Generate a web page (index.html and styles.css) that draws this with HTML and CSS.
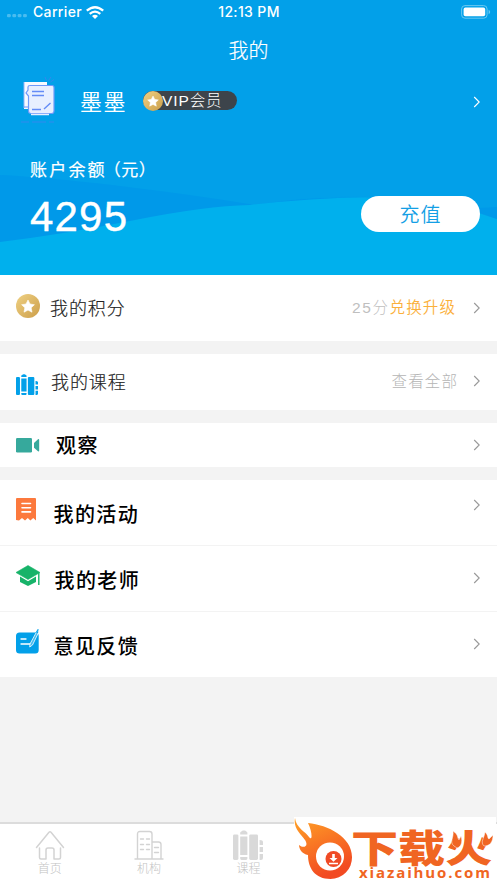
FILE: index.html
```html
<!DOCTYPE html>
<html lang="zh-CN">
<head>
<meta charset="utf-8">
<title>我的</title>
<link rel="stylesheet" href="styles.css">
</head>
<body>
<svg class="defs" width="0" height="0">
  <defs>
    <linearGradient id="gold" x1="0" y1="0" x2="1" y2="1"><stop offset="0" stop-color="#efd184"/><stop offset="1" stop-color="#cc9e49"/></linearGradient>
    <linearGradient id="fire" x1="0" y1="0" x2="0.4" y2="1"><stop offset="0" stop-color="#ffa126"/><stop offset="1" stop-color="#f24a22"/></linearGradient>
    <symbol id="star" viewBox="0 0 24 24"><circle cx="12" cy="12" r="12" fill="url(#gold)"/><path d="M12 6l2 4 4.4.7-3.2 3.1.8 4.4-4-2.1-4 2.1.8-4.4-3.2-3.1L10 10z" fill="#fff" stroke="#fff" stroke-width=".6" stroke-linejoin="round"/></symbol>
    <symbol id="books" viewBox="0 0 30 30"><rect x="0" y="4.400" width="5.400" height="25.600" rx="1.400"/><path d="M7.200 4.400V2.800Q7.200 1.800 8.400 1.600Q9 .4 10.400 .4H11.400Q12.800 .4 13.300 1.600Q14.400 1.800 14.400 2.800V4.400zM7.200 6.400H14.400V25H7.200zM7.200 27H14.400V28.600Q14.400 30 13 30H8.600Q7.200 30 7.200 28.600z"/><rect x="16.200" y="4.400" width="8.800" height="25.600" rx="1.400"/><path d="M26.600 15V10Q30 10 30 12V15zM26.600 17H30V22H26.600zM26.600 24H30V28Q30 30 28 30H26.600z"/></symbol>
    <symbol id="chev" viewBox="0 0 8 12"><path d="M1.200 1L6.200 6 1.200 11" fill="none" stroke="currentColor" stroke-width="1.100"/></symbol>
  </defs>
</svg>
<div class="app">
  <header class="hero">
    <svg class="waves" viewBox="0 0 497 275">
      <rect width="497" height="275" fill="#02a0e9"/>
      <path d="M0 175Q45 177 120 186T255 205Q370 185 497 220V275H0z" fill="#0099e9"/>
      <path d="M255 205Q370 185 497 214V190H255z" fill="#02a0e9"/>
      <path d="M0 242Q65 234 135 220T250 205Q310 198 365 197.500Q440 199 497 219V275H0z" fill="#00b0ed"/>
      <path d="M480 208L497 207V219L480 213z" fill="#0099e9"/>
    </svg>
    <div class="status">
      <div class="carrier">
        <svg width="22" height="4" viewBox="0 0 22 4" fill="#49bcf0"><rect x="0" width="4" height="3.400" rx="1.200"/><rect x="5.600" width="4" height="3.400" rx="1.200"/><rect x="11.200" width="4" height="3.400" rx="1.200"/><rect x="16.800" width="4" height="3.400" rx="1.200"/></svg>
        <span>Carrier</span>
        <svg width="18" height="13" viewBox="0 0 18 13" fill="none" stroke="#fff" stroke-width="2.300"><path d="M.8 4.700Q9-2.300 17.200 4.700M3.700 7.800Q9 3.400 14.300 7.800"/><path d="M6 10Q9 7.600 12 10L9 13z" fill="#fff" stroke="none"/></svg>
      </div>
      <time>12:13 PM</time>
      <svg class="battery" width="30" height="14" viewBox="0 0 30 14"><rect x=".6" y=".6" width="25.500" height="12.600" rx="3.400" fill="none" stroke="#69c8f2"/><rect x="2.600" y="2.600" width="21.600" height="8.600" rx="1.800" fill="#fff"/><path d="M27.600 4.800Q29.200 5.500 29.200 7T27.600 9.200z" fill="#69c8f2"/></svg>
    </div>
    <h1>我的</h1>
    <div class="profile">
      <svg class="avatar" width="36" height="48" viewBox="0 0 36 48">
        <path d="M3 6H26V33H3z" fill="#f8faff"/><path d="M3 32V6" stroke="#8fb5fb" fill="none"/><path d="M3 31H8" stroke="#6d94fa"/>
        <path d="M7 11Q7 9.500 9 9.500H31Q33 9.500 33 11.500V35Q33 37.500 30.500 37.500H10Q7.500 37.500 7.500 35V20L5 17L7 14z" fill="#e8efff" stroke="#709afa" stroke-width="1.200"/>
        <path d="M11 15.500H23M11 19.500H23M11 33.500H20M23 33L29.500 27" fill="none" stroke="#648bf6" stroke-width="1.400"/>
        <path d="M10 38.500H28" stroke="#e8efff" stroke-width="1.500"/><path d="M24 1L25.500 4.500M30 1L27.500 4.500M33 3.500L29.500 6M0 46H8M11 46H25M28 46H33" stroke="#3289ee" fill="none"/>
      </svg>
      <span class="name">墨墨</span>
      <span class="vip"><svg width="20" height="20"><use href="#star"/></svg><span>VIP会员</span></span>
      <svg class="chev"><use href="#chev"/></svg>
    </div>
    <div class="balance">
      <div><div class="label">账户余额<span class="unit">（元）</span></div><div class="amount">4295</div></div>
      <button class="recharge">充值</button>
    </div>
  </header>
  <main>
    <section class="row points">
      <svg class="icon" width="24" height="24"><use href="#star"/></svg>
      <span class="title">我的积分</span><span class="extra"><i>25分</i><b>兑换升级</b></span><svg class="chev"><use href="#chev"/></svg>
    </section>
    <section class="row courses">
      <svg class="icon" width="22" height="21" viewBox="0 0 22 21" fill="#02a0e9"><use href="#books" width="22" height="21" transform="scale(1.048 1) translate(-.5 0)"/></svg>
      <span class="title">我的课程</span><span class="extra">查看全部</span><svg class="chev"><use href="#chev"/></svg>
    </section>
    <section class="row watch">
      <svg class="icon" width="24" height="15" viewBox="0 0 24 15" fill="#36a99c"><rect width="16" height="14.500" rx="1.200"/><path d="M18 5L22 1.200Q23.200 .8 23.200 2V12.500Q23.200 13.700 22 13.300L18 9.800z"/></svg>
      <span class="title strong">观察</span><svg class="chev"><use href="#chev"/></svg>
    </section>
    <section class="group">
      <div class="row activity">
        <svg class="icon" width="20" height="23" viewBox="0 0 20 23"><path d="M1 0H19Q20 0 20 1V22.500L17.200 20 14.400 22.500 11.800 20 9 22.500 6 20 3 22.500 0 22V1Q0 0 1 0z" fill="#fc793d"/><path d="M6 5.500H14.500M6 9.700H14.500M6 13.900H14.500" stroke="#fff" stroke-width="1.600" stroke-linecap="round"/></svg>
        <span class="title strong">我的活动</span><svg class="chev"><use href="#chev"/></svg>
      </div>
      <div class="row teacher">
        <svg class="icon" width="24" height="22" viewBox="0 0 24 22"><path d="M0 7.500L12 .5 24 7.500 12 14.500z" fill="#17b369" stroke="#17b369" stroke-width=".6" stroke-linejoin="round"/><path d="M4 11.500L12 16.200 20 11.500V17L12 21 4 17z" fill="#17b369"/><path d="M22.800 8V20" fill="none" stroke="#17b369" stroke-width="1.400"/></svg>
        <span class="title strong">我的老师</span><svg class="chev"><use href="#chev"/></svg>
      </div>
      <div class="row feedback">
        <svg class="icon" width="24" height="25" viewBox="0 0 24 25"><rect y="3.500" width="22.700" height="21" rx="3.500" fill="#02a0e9"/><path d="M5 10H10M5 15H15" stroke="#fff" stroke-width="1.300" stroke-linecap="round"/><path d="M20.500 3L14 15 13.700 18 16.500 16 22.500 3.500" fill="#44bbf0" stroke="#fff" stroke-width=".8"/><path d="M19.800 4L22 .4 21.500 4" fill="none" stroke="#02a0e9" stroke-width="1"/></svg>
        <span class="title strong">意见反馈</span><svg class="chev"><use href="#chev"/></svg>
      </div>
    </section>
  </main>
  <nav>
    <a><svg width="30" height="30" viewBox="0 0 30 30" fill="none" stroke="#d3d3d3" stroke-width="1.500" stroke-linecap="round" stroke-linejoin="round"><path d="M1.500 17.500L14 2.200Q15 1.200 16 2.200L28.500 17.500M4.500 18V27.500Q4.500 29 6 29H11V20Q11 18 13 18H17Q19 18 19 20V29H24Q25.500 29 25.500 27.500V18"/></svg><span>首页</span></a>
    <a><svg width="30" height="30" viewBox="0 0 30 30" fill="none" stroke="#d3d3d3" stroke-width="1.400" stroke-linecap="round"><path d="M1 29H29M3.500 29V4Q3.500 1.500 6 1.500H15.500Q18 1.500 18 4V29M18 12H24.500Q27 12 27 14.500V29M6.500 9H9.500M12.500 9H15.500M6.500 14.500H9.500M12.500 14.500H15.500M6.500 19.500H9.500M12.500 19.500H15.500M20.500 17.500H24.500M20.500 22.500H24.500"/></svg><span>机构</span></a>
    <a><svg width="30" height="30" fill="#d9d9d9"><use href="#books"/></svg><span>课程</span></a>
  </nav>
  <svg class="brand" width="202" height="65" viewBox="0 0 202 65">
    <rect width="202" height="65" fill="#fff"/>
    <path d="M1 1C2 11 12 15 15 20C19 25 18 14 14 6C34 8 58 20 58 40A21.500 21.500 0 0 1 36.500 62C21 62 14 51 14 38C8 37 5 32 5 28C10 32 15 29 11 23C7 17 -1 12 1 1z" fill="url(#fire)"/>
    <circle cx="36" cy="39.500" r="14" fill="#fff"/><circle cx="39.500" cy="42" r="8" fill="#f04a25"/>
    <path d="M38.200 37H40.800V41H43.500L39.500 44.800 35.500 41H38.200zM35 45.800H44V47.200H35z" fill="#fff"/>
    <text transform="translate(57 45) scale(1.240 1)" class="brand-name">下载火</text>
    <path d="M160 29C155 25 160 21 159 14C165 18 163 21 165 23L167 19C169 25 167 30 163 31zM190 29C186 25 190 22 191 15C195 19 193 21 195 22L199 18C199 25 196 29 190 29z" fill="#f06522" stroke="#fff" stroke-width=".5"/>
    <text x="65" y="61" textLength="131" lengthAdjust="spacing" class="brand-url">xiazaihuo.com</text>
  </svg>
</div>
</body>
</html>
```
FILE: styles.css
```css
* { box-sizing: border-box; }
body { margin: 0; font-family: "Noto Sans CJK SC", "Noto Sans", sans-serif; }
svg { display: block; flex: none; }
.defs { position: absolute; }
.app { position: relative; display: flex; flex-direction: column; width: 497px; height: 883px; background: #f3f3f3; overflow: hidden; }
.hero { position: relative; height: 275px; color: #fff; }
.waves { position: absolute; inset: 0; width: 497px; height: 275px; }
.status, h1, .profile, .balance { position: relative; }
.status { display: grid; grid-template-columns: 1fr auto 1fr; align-items: center; height: 24px; padding: 0 6px 0 7px; font: 500 14px/24px Inter, sans-serif; letter-spacing: .35px; }
.carrier { display: flex; align-items: center; gap: 5px; }
.carrier svg:first-child { margin-top: 8px; width: 21px; }
.carrier svg:last-child { margin-left: -1px; }
.battery { justify-self: end; }
h1 { margin: 0; height: 51px; font-size: 20px; font-weight: 300; line-height: 52px; text-align: center; -webkit-text-stroke: .2px #fff; }
.profile { display: flex; align-items: center; height: 52px; padding: 0 16px 0 21px; }
.avatar { margin-top: -3px; }
.name { margin-left: 23px; width: 63px; font-size: 22px; letter-spacing: 1.500px; line-height: 48px; margin-top: -2px; }
.vip { display: flex; align-items: center; width: 94px; height: 19px; margin-top: -1px; border-radius: 10px; background: #3d444b; font: 400 15.500px/19px "Liberation Sans", "Noto Sans CJK SC", sans-serif; letter-spacing: .9px; white-space: nowrap; }
.vip span { margin-left: -1px; margin-top: -1px; font-weight: 300; }
.chev { width: 8px; height: 12px; margin-left: auto; color: #999; }
.profile .chev { color: #fff; margin-top: 2px; }
.balance { display: flex; justify-content: space-between; padding: 29px 17px 0 30px; }
.label { height: 26px; font-size: 17px; font-weight: 400; line-height: 26px; letter-spacing: 2.200px; white-space: nowrap; -webkit-text-stroke: .2px #fff; }
.unit { letter-spacing: .5px; margin-left: -3px; }
.amount { margin-top: 11px; height: 48px; font: 42px/48px "Liberation Sans", sans-serif; letter-spacing: 1.200px; -webkit-text-stroke: .4px #fff; }
.recharge { width: 119px; height: 36px; margin-top: 40px; padding: 0; border: 0; border-radius: 18px; background: #fff; color: #149fe5; font: 350 20px/36px "Noto Sans CJK SC", sans-serif; letter-spacing: 1px; }
main { flex: 1; display: flex; flex-direction: column; gap: 13px; }
.row { display: flex; align-items: center; padding: 0 16px; background: #fff; }
.points { height: 66px; }
.courses { height: 56px; }
.watch { height: 44px; }
.group { display: grid; gap: 1px; }
.group .row { height: 65px; }
.title { margin-left: 10px; font-size: 18px; font-weight: 300; letter-spacing: .9px; line-height: 26px; color: #222; -webkit-text-stroke: .15px #222; }
.strong { font-size: 20px; font-weight: 500; letter-spacing: 1.400px; color: #000; -webkit-text-stroke: 0; }
.extra { margin-left: auto; font-size: 15.500px; font-weight: 300; letter-spacing: 1.100px; line-height: 24px; color: #b5b5b5; }
.extra i { font-family: "Liberation Sans", "Noto Sans CJK SC", sans-serif; font-style: normal; letter-spacing: 1.600px; color: #bfbfbf; }
.extra b { font-weight: 350; color: #fbb03b; }
.extra + .chev { margin-left: 17px; }
.points .icon { margin-top: -4px; }
.points .extra { margin-top: -2px; }
.points .chev { margin-top: -1px; }
.points .title { margin-top: -3px; }
.courses .icon { margin-top: 4px; }
.courses .title { margin-left: 13px; margin-top: -2px; }
.courses .extra { margin-top: -4px; }
.courses .chev { margin-top: -2px; }
.courses .extra + .chev { margin-left: 15px; }
.watch .title { margin-left: 16px; }
.watch .chev { margin-top: -1px; }
.activity .icon { margin-top: -6px; }
.activity .title { margin-left: 17.500px; margin-top: 2px; }
.activity .chev { margin-top: -16px; }
.teacher .icon { margin-top: -5px; }
.teacher .title { margin-left: 14.500px; margin-top: 2px; }
.teacher .chev, .feedback .chev { margin-top: -2px; }
.feedback .icon { margin-top: -6px; }
.feedback .title { margin-left: 13.500px; margin-top: 2px; }
nav { display: grid; grid-template-columns: repeat(5, 99.400px); height: 61px; padding-top: 6px; border-top: 2px solid #dcdcdc; background: #fff; }
nav a { display: flex; flex-direction: column; align-items: center; color: #c3c3c3; font-size: 12px; font-weight: 300; line-height: 16px; }
.brand { position: absolute; right: 1px; bottom: 1px; }
.brand-name { font: 900 38px "Noto Sans CJK SC", sans-serif; fill: #f06522; }
.brand-url { font: 700 15px "Open Sans", sans-serif; fill: #f06522; }
```
